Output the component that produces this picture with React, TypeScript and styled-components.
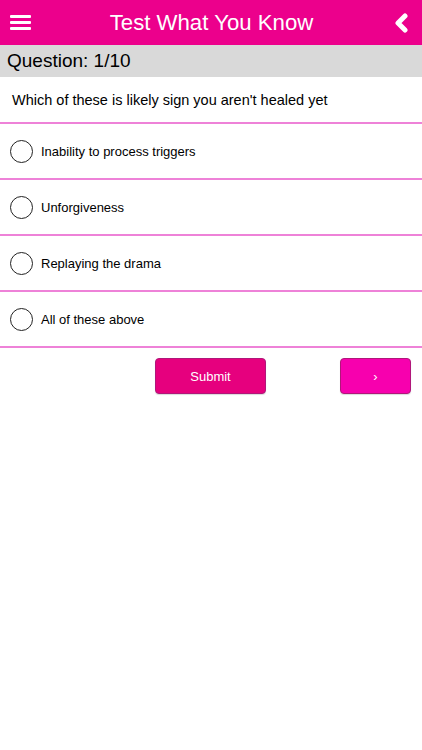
import styled, { createGlobalStyle } from "styled-components";

const GlobalStyle = createGlobalStyle`
    html, body {
        margin: 0;
        padding: 0;
        background: #ffffff;
        font-family: "Liberation Sans", Arial, sans-serif;
    }
`;

const Screen = styled("div")`
    width: 422px;
    min-height: 750px;
    background: #ffffff;
`;

const Header = styled("div")`
    height: 45px;
    background: #ec008c;
    display: flex;
    align-items: center;
    justify-content: space-between;
    padding: 0 10px 0 9px;
    box-sizing: border-box;
`;

const Title = styled("h1")`
    margin: 0 0 0 2px;
    font-weight: normal;
    font-size: 22.2px;
    color: #ffffff;
`;

const IconButton = styled("button")`
    background: none;
    border: none;
    padding: 0;
    width: 22px;
    height: 22px;
    display: flex;
    align-items: center;
    justify-content: center;
`;

const CountBar = styled("div")`
    height: 32px;
    background: #d9d9d9;
    display: flex;
    align-items: center;
    padding-left: 7px;
    font-size: 19px;
    color: #000;
`;

const QuestionText = styled("div")`
    height: 47px;
    display: flex;
    align-items: center;
    padding: 0 0 0 12px;
    box-sizing: border-box;
    font-size: 14.5px;
    color: #000;
    border-bottom: 2px solid #ee82d8;
`;

const OptionRow = styled("label")`
    height: 54px;
    display: flex;
    align-items: center;
    gap: 8px;
    padding-left: 10px;
    border-bottom: 2px solid #ee82d8;
    font-size: 13px;
    color: #000;
`;

const Radio = styled("span")`
    width: 21px;
    height: 21px;
    border: 1.5px solid #222;
    border-radius: 50%;
    box-sizing: content-box;
`;

const Actions = styled("div")`
    display: flex;
    justify-content: flex-end;
    gap: 74px;
    padding: 10px 11px 0 0;
`;

const ActionButton = styled("button")<{ $bright?: boolean }>`
    height: 36px;
    width: ${(p) => (p.$bright ? "71px" : "111px")};
    background: ${(p) => (p.$bright ? "#f700ae" : "#e6007e")};
    border: 1px solid #b0177a;
    border-radius: 4px;
    color: #ffffff;
    font-family: "Liberation Sans", Arial, sans-serif;
    font-size: 13px;
    box-shadow: 0 1px 1px rgba(0, 0, 0, 0.15);
`;

const options = [
    "Inability to process triggers",
    "Unforgiveness",
    "Replaying the drama",
    "All of these above",
];

const App = () => {
    return (
        <Screen>
            <GlobalStyle />
            <Header>
                <IconButton>
                    <svg width="21" height="17" viewBox="0 0 21 17">
                        <rect x="0" y="1" width="21" height="3" rx="1" fill="#fff" />
                        <rect x="0" y="7" width="21" height="3" rx="1" fill="#fff" />
                        <rect x="0" y="13" width="21" height="3" rx="1" fill="#fff" />
                    </svg>
                </IconButton>
                <Title>Test What You Know</Title>
                <IconButton>
                    <svg width="16" height="20" viewBox="0 0 16 20">
                        <path d="M12 3 L5 10 L12 17" stroke="#fff" strokeWidth="5" fill="none" strokeLinecap="round" strokeLinejoin="round" />
                    </svg>
                </IconButton>
            </Header>
            <CountBar>Question: 1/10</CountBar>
            <QuestionText>Which of these is likely sign you aren't healed yet</QuestionText>
            {options.map((option) => (
                <OptionRow key={option}>
                    <Radio />
                    {option}
                </OptionRow>
            ))}
            <Actions>
                <ActionButton>Submit</ActionButton>
                <ActionButton $bright>›</ActionButton>
            </Actions>
        </Screen>
    );
};

export default App;
